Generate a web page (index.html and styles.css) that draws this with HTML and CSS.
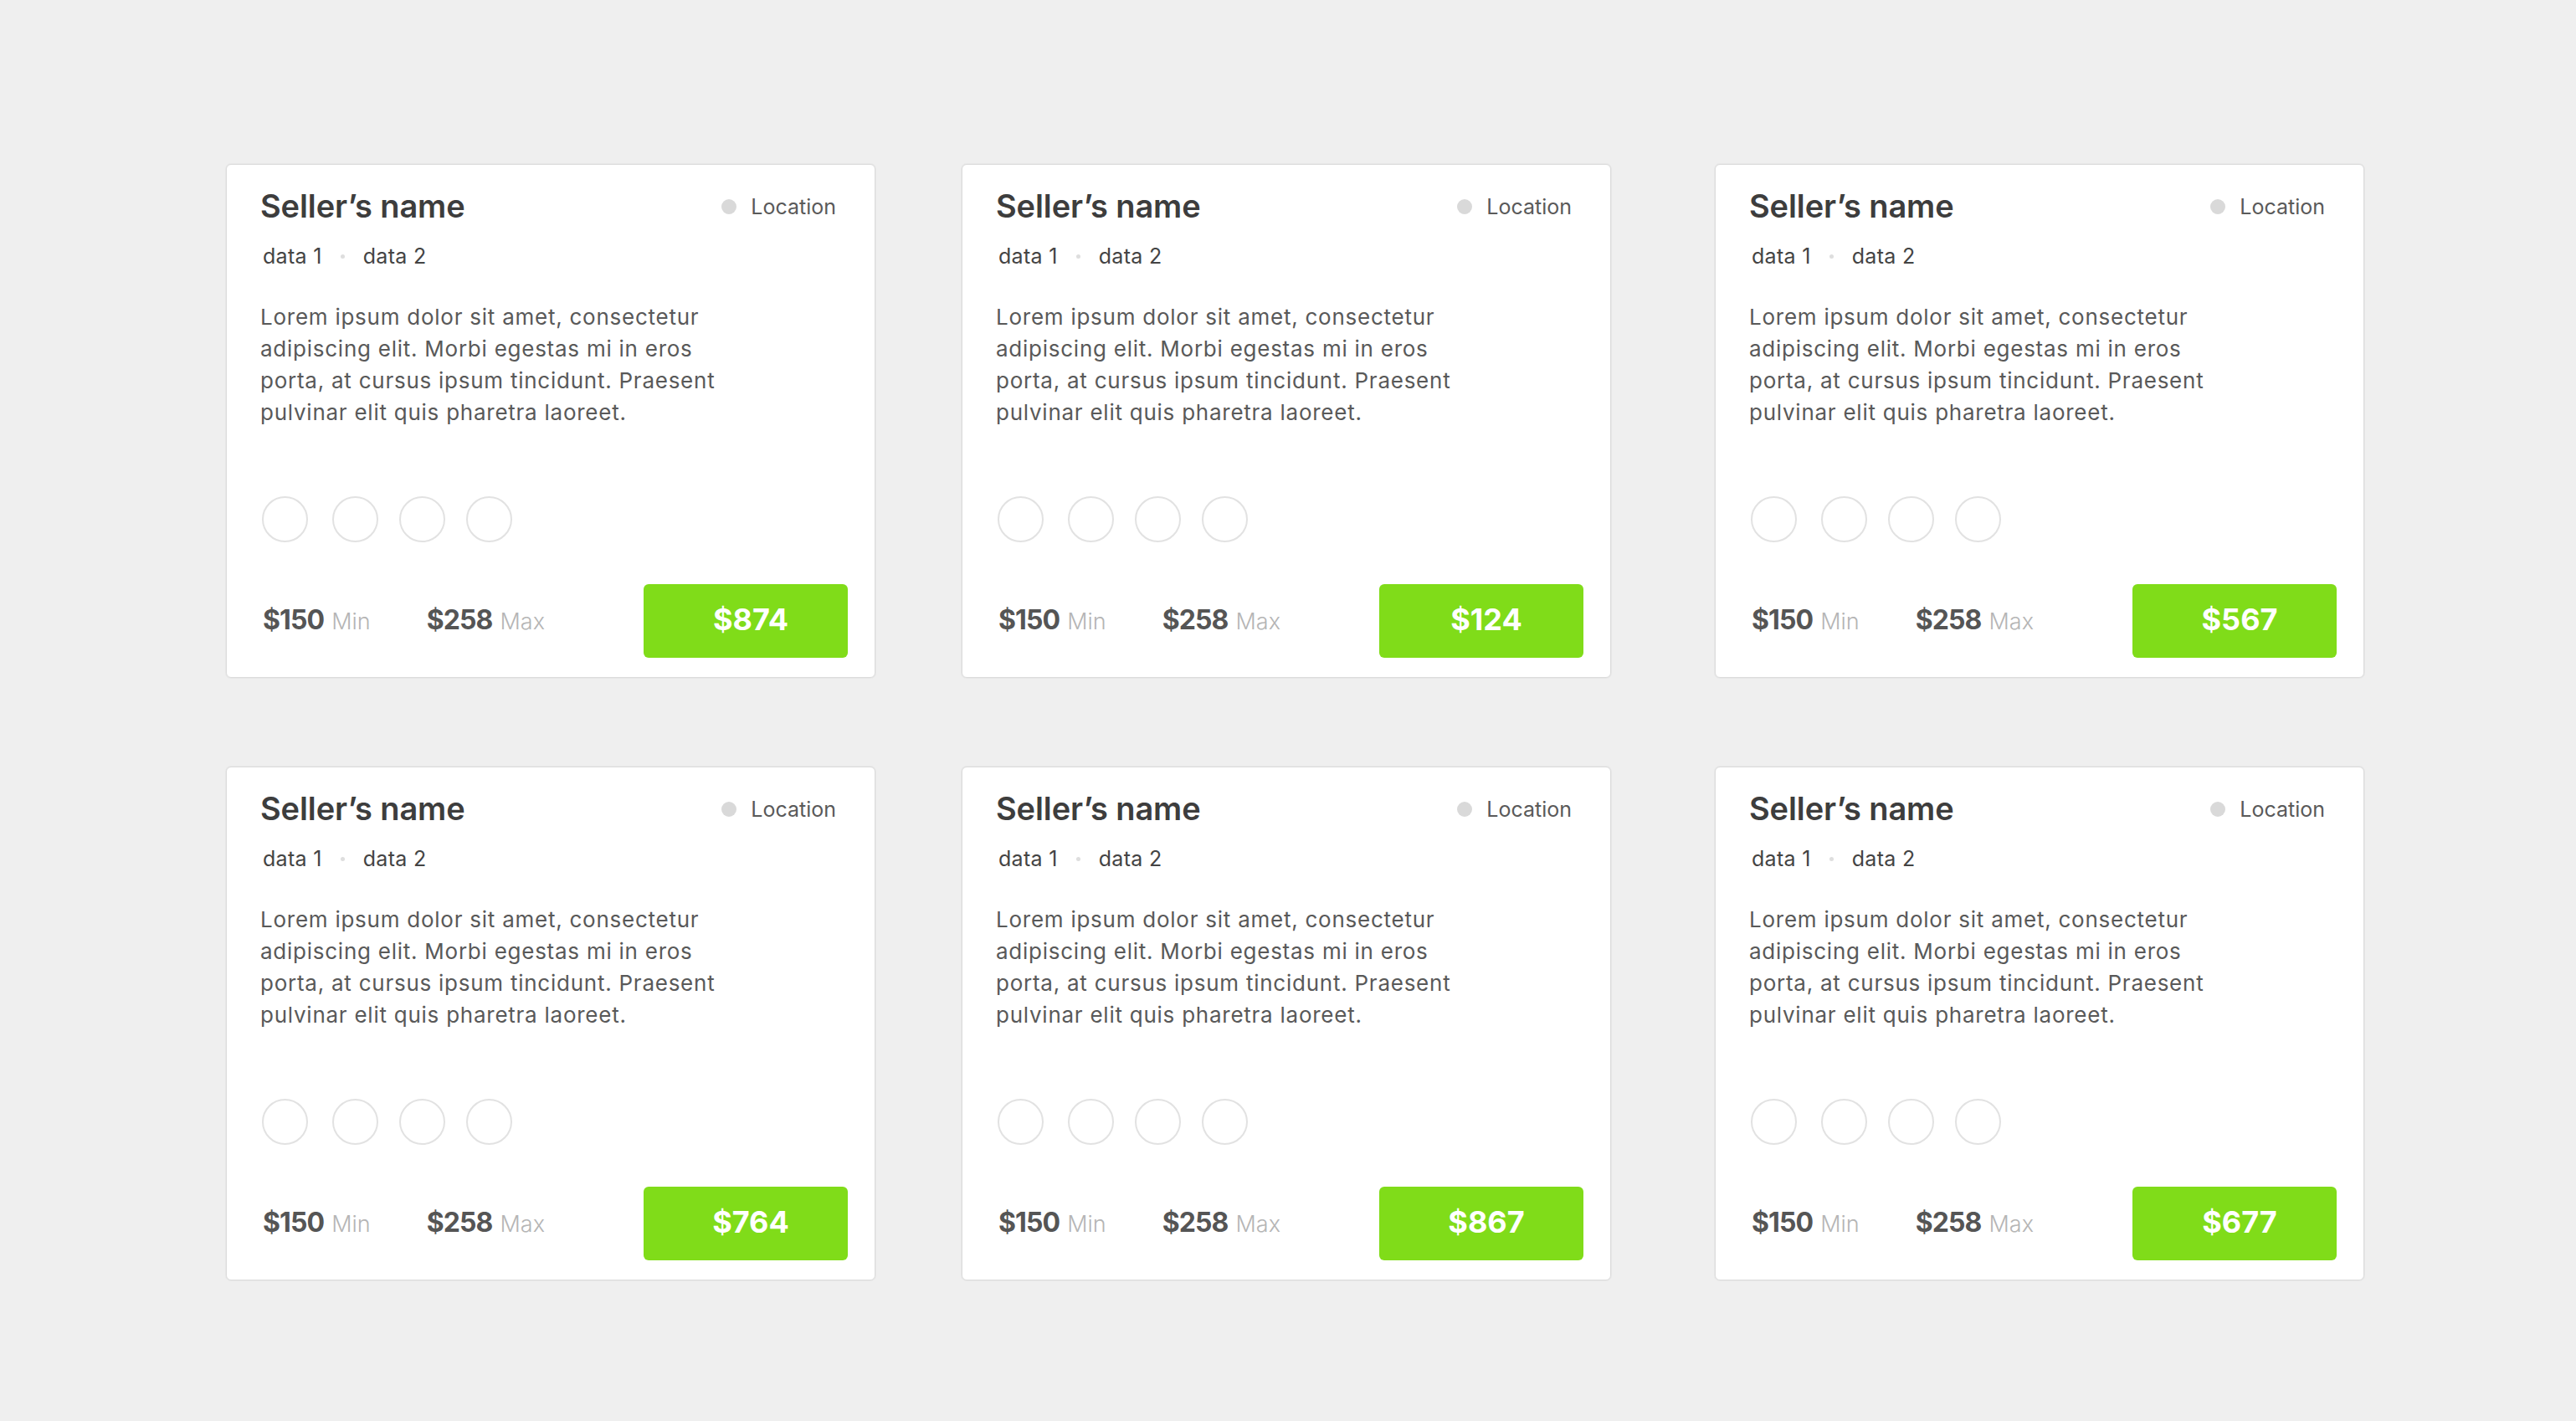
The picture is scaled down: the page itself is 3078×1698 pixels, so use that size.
FILE: index.html
```html
<!DOCTYPE html>
<html lang="en">
<head>
<meta charset="utf-8">
<title>Sellers</title>
<link rel="stylesheet" href="styles.css">
</head>
<body>
<main class="grid">
  <article class="card">
    <header class="card-head">
      <h2 class="seller">Seller’s name</h2>
      <span class="location"><span class="loc-dot"></span>Location</span>
    </header>
    <div class="meta"><span>data 1</span><span class="sep"></span><span>data 2</span></div>
    <p class="desc">Lorem ipsum dolor sit amet, consectetur<br>adipiscing elit. Morbi egestas mi in eros<br>porta, at cursus ipsum tincidunt. Praesent<br>pulvinar elit quis pharetra laoreet.</p>
    <div class="circles"><span></span><span></span><span></span><span></span></div>
    <footer class="card-foot">
      <div class="range"><span class="amt">$150</span><span class="lbl">Min</span></div>
      <div class="range"><span class="amt">$258</span><span class="lbl">Max</span></div>
      <button class="price">$874</button>
    </footer>
  </article>
  <article class="card">
    <header class="card-head">
      <h2 class="seller">Seller’s name</h2>
      <span class="location"><span class="loc-dot"></span>Location</span>
    </header>
    <div class="meta"><span>data 1</span><span class="sep"></span><span>data 2</span></div>
    <p class="desc">Lorem ipsum dolor sit amet, consectetur<br>adipiscing elit. Morbi egestas mi in eros<br>porta, at cursus ipsum tincidunt. Praesent<br>pulvinar elit quis pharetra laoreet.</p>
    <div class="circles"><span></span><span></span><span></span><span></span></div>
    <footer class="card-foot">
      <div class="range"><span class="amt">$150</span><span class="lbl">Min</span></div>
      <div class="range"><span class="amt">$258</span><span class="lbl">Max</span></div>
      <button class="price">$124</button>
    </footer>
  </article>
  <article class="card">
    <header class="card-head">
      <h2 class="seller">Seller’s name</h2>
      <span class="location"><span class="loc-dot"></span>Location</span>
    </header>
    <div class="meta"><span>data 1</span><span class="sep"></span><span>data 2</span></div>
    <p class="desc">Lorem ipsum dolor sit amet, consectetur<br>adipiscing elit. Morbi egestas mi in eros<br>porta, at cursus ipsum tincidunt. Praesent<br>pulvinar elit quis pharetra laoreet.</p>
    <div class="circles"><span></span><span></span><span></span><span></span></div>
    <footer class="card-foot">
      <div class="range"><span class="amt">$150</span><span class="lbl">Min</span></div>
      <div class="range"><span class="amt">$258</span><span class="lbl">Max</span></div>
      <button class="price">$567</button>
    </footer>
  </article>
  <article class="card">
    <header class="card-head">
      <h2 class="seller">Seller’s name</h2>
      <span class="location"><span class="loc-dot"></span>Location</span>
    </header>
    <div class="meta"><span>data 1</span><span class="sep"></span><span>data 2</span></div>
    <p class="desc">Lorem ipsum dolor sit amet, consectetur<br>adipiscing elit. Morbi egestas mi in eros<br>porta, at cursus ipsum tincidunt. Praesent<br>pulvinar elit quis pharetra laoreet.</p>
    <div class="circles"><span></span><span></span><span></span><span></span></div>
    <footer class="card-foot">
      <div class="range"><span class="amt">$150</span><span class="lbl">Min</span></div>
      <div class="range"><span class="amt">$258</span><span class="lbl">Max</span></div>
      <button class="price">$764</button>
    </footer>
  </article>
  <article class="card">
    <header class="card-head">
      <h2 class="seller">Seller’s name</h2>
      <span class="location"><span class="loc-dot"></span>Location</span>
    </header>
    <div class="meta"><span>data 1</span><span class="sep"></span><span>data 2</span></div>
    <p class="desc">Lorem ipsum dolor sit amet, consectetur<br>adipiscing elit. Morbi egestas mi in eros<br>porta, at cursus ipsum tincidunt. Praesent<br>pulvinar elit quis pharetra laoreet.</p>
    <div class="circles"><span></span><span></span><span></span><span></span></div>
    <footer class="card-foot">
      <div class="range"><span class="amt">$150</span><span class="lbl">Min</span></div>
      <div class="range"><span class="amt">$258</span><span class="lbl">Max</span></div>
      <button class="price">$867</button>
    </footer>
  </article>
  <article class="card">
    <header class="card-head">
      <h2 class="seller">Seller’s name</h2>
      <span class="location"><span class="loc-dot"></span>Location</span>
    </header>
    <div class="meta"><span>data 1</span><span class="sep"></span><span>data 2</span></div>
    <p class="desc">Lorem ipsum dolor sit amet, consectetur<br>adipiscing elit. Morbi egestas mi in eros<br>porta, at cursus ipsum tincidunt. Praesent<br>pulvinar elit quis pharetra laoreet.</p>
    <div class="circles"><span></span><span></span><span></span><span></span></div>
    <footer class="card-foot">
      <div class="range"><span class="amt">$150</span><span class="lbl">Min</span></div>
      <div class="range"><span class="amt">$258</span><span class="lbl">Max</span></div>
      <button class="price">$677</button>
    </footer>
  </article>
</main>
</body>
</html>
```

FILE: styles.css
```css
* { box-sizing: border-box; }

html, body {
  margin: 0;
  padding: 0;
  background: #efefef;
}

body {
  font-family: Inter, "Noto Sans", "Liberation Sans", sans-serif;
  color: #555;
  width: 3078px;
  height: 1698px;
  overflow: hidden;
}

.grid {
  display: grid;
  grid-template-columns: 776px 776px 797px;
  column-gap: 103px;
  row-gap: 106px;
  padding: 196px 0 0 270px;
}

.card {
  width: 776px;
  background: #fff;
  border: 1px solid #dcdcdc;
  border-radius: 6px;
  box-shadow: 0 0 0 1px rgba(0, 0, 0, 0.03);
  padding: 27px 32px 23px 40px;
  display: flex;
  flex-direction: column;
}

.card:nth-child(3n) {
  justify-self: end;
}

.card-head {
  display: flex;
  justify-content: space-between;
  align-items: baseline;
  height: 44px;
  margin-right: 14px;
}

.seller {
  margin: 0;
  font-size: 38px;
  line-height: 44px;
  font-weight: 600;
  color: #3d3d3d;
  letter-spacing: -0.1px;
}

.location {
  display: flex;
  align-items: center;
  gap: 17px;
  font-size: 25px;
  line-height: 30px;
  color: #5a5a5a;
  position: relative;
  top: -4px;
}

.loc-dot {
  width: 18px;
  height: 18px;
  border-radius: 50%;
  background: #d9d9d9;
}

.meta {
  margin-top: 24px;
  height: 28px;
  display: flex;
  align-items: center;
  gap: 22px;
  font-size: 25px;
  line-height: 28px;
  letter-spacing: 0.3px;
  color: #444;
  padding-left: 3px;
}

.sep {
  width: 5px;
  height: 5px;
  border-radius: 50%;
  background: #dedede;
}

.desc {
  margin: 40px 0 0;
  font-size: 26px;
  line-height: 38px;
  letter-spacing: 0.75px;
  color: #595959;
}

.circles {
  margin-top: 81px;
  display: flex;
  gap: 25px;
  padding-left: 2px;
}

.circles span {
  width: 55px;
  height: 55px;
  border-radius: 50%;
  border: 2px solid #e2e2e2;
}

.circles span:first-child {
  margin-right: 4px;
}

.card-foot {
  margin-top: 50px;
  display: flex;
  align-items: center;
  height: 88px;
}

.range {
  display: flex;
  align-items: baseline;
  gap: 9px;
  line-height: 40px;
  padding-left: 3px;
  margin-right: 64px;
}

.amt {
  font-size: 32px;
  font-weight: 700;
  color: #555;
  letter-spacing: -0.9px;
}

.lbl {
  font-size: 27px;
  font-weight: 300;
  color: #b5b5b5;
}

.price {
  margin-left: auto;
  width: 244px;
  height: 88px;
  border: 0;
  border-radius: 6px;
  background: #80dc19;
  color: #fff;
  font-family: inherit;
  font-size: 36px;
  font-weight: 700;
  padding: 0 0 4px 12px;
}
```
